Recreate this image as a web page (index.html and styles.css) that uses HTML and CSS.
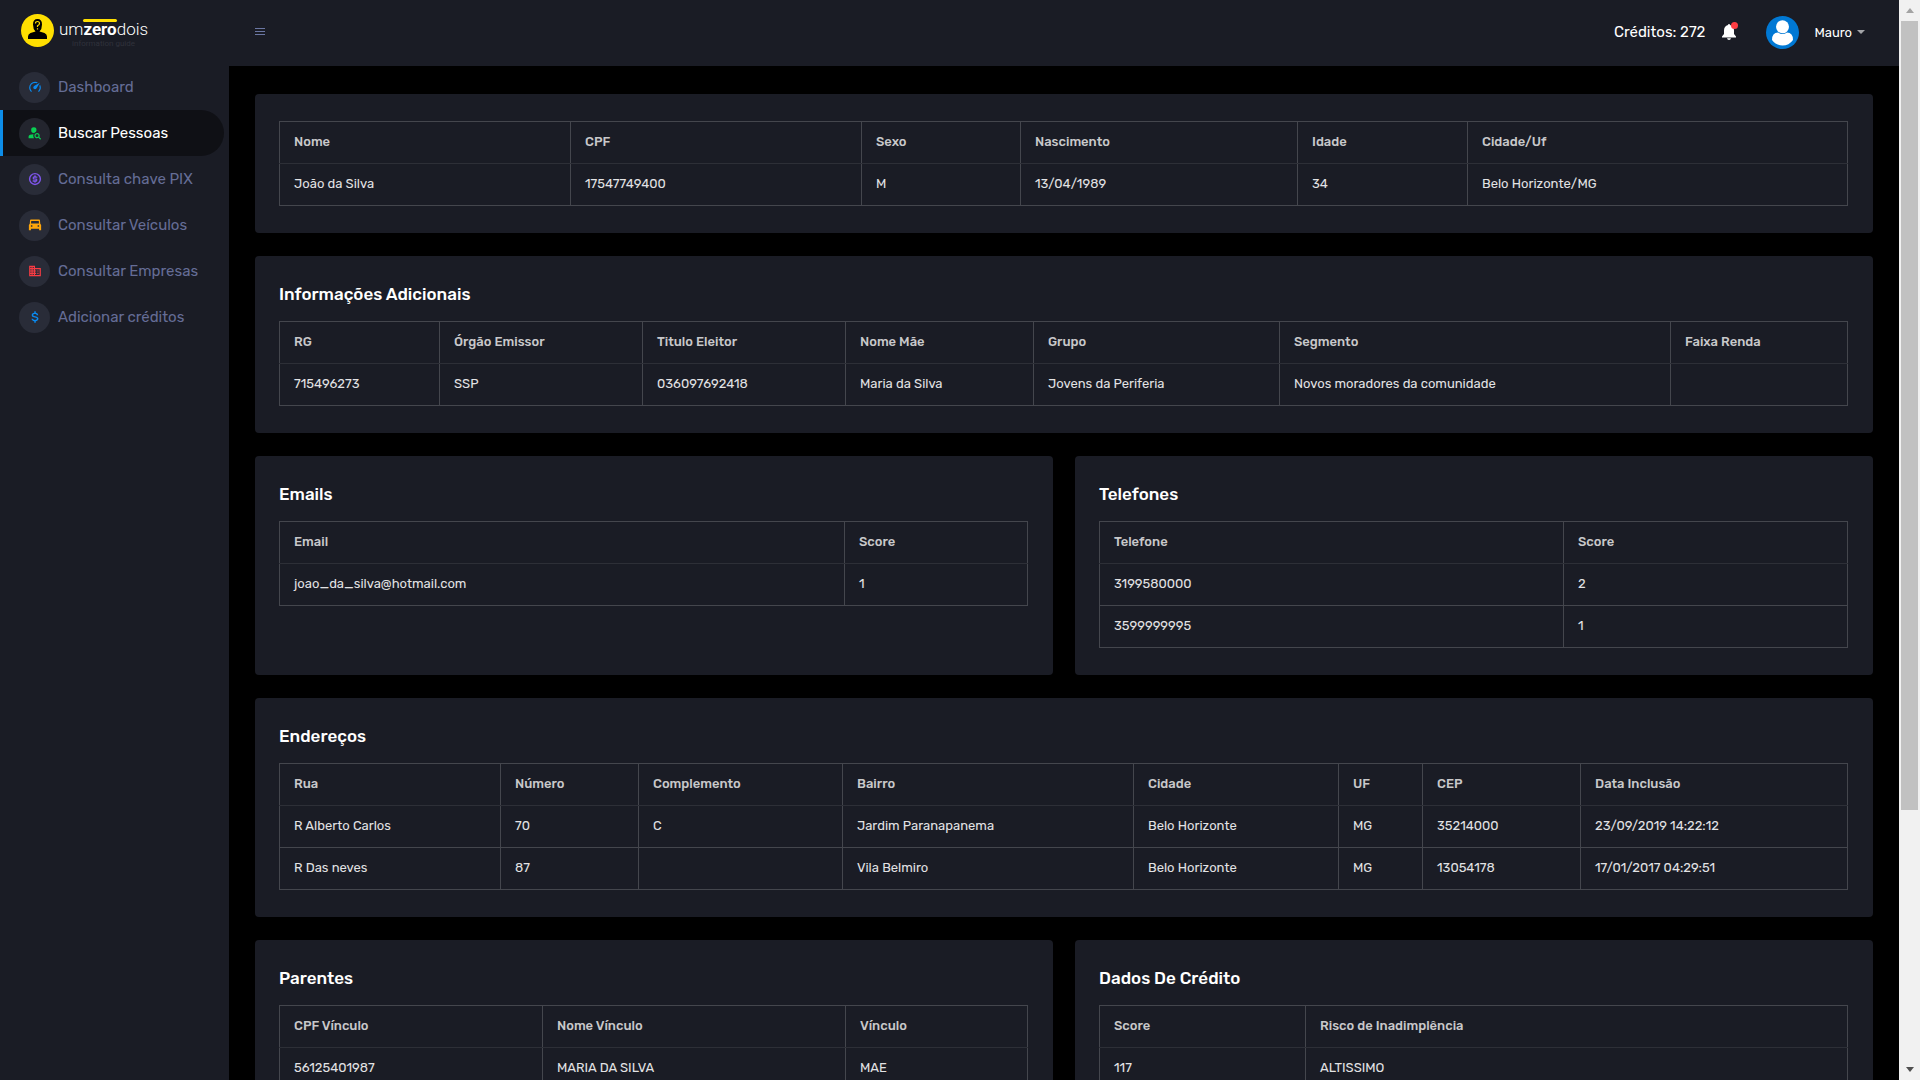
FILE: index.html
```html
<!DOCTYPE html>
<html lang="pt-BR">
<head>
<meta charset="utf-8">
<title>umzerodois - Buscar Pessoas</title>
<link rel="stylesheet" href="styles.css">
</head>
<body>
<div class="viewport">
  <aside class="sidebar">
    <a class="logo" href="#">
      <svg class="logo-mark" viewBox="0 0 33 33" aria-hidden="true">
        <circle cx="16.500" cy="16.500" r="16.500" fill="#ffdf00"/>
        <path d="M7 25V22.500Q7 20 9.500 19L14.500 17.500Q12 15 12 10.500Q12 5 16.500 5Q21 5 21 10.500Q21 15 18.500 17.500L23.500 19Q26 20 26 22.500V25Z" fill="#000"/>
        <path d="M14.500 9.500Q14.500 7.500 16.500 7.500Q18.500 7.500 18.500 9.500Q18.500 10.800 16.500 11.800V13M16.500 14.200V15.400" fill="none" stroke="#ffdf00" stroke-width="1.200"/>
      </svg>
      <span class="logo-text">
        <span class="logo-name">um<b class="logo-zero">zero</b>dois</span>
        <span class="logo-tag">information guide</span>
      </span>
    </a>
    <nav class="menu">
      <a class="menu-item" href="#"><span class="menu-icon blue"><svg viewBox="0 0 24 24"><path d="M12,16A3,3 0 0,1 9,13C9,11.88 9.61,10.9 10.5,10.39L20.21,4.77L14.68,14.35C14.18,15.33 13.17,16 12,16M12,3C13.81,3 15.5,3.5 16.97,4.32L14.87,5.53C14,5.19 13,5 12,5A8,8 0 0,0 4,13C4,15.21 4.89,17.21 6.34,18.65H6.35C6.74,19.04 6.74,19.67 6.35,20.06C5.96,20.45 5.32,20.45 4.93,20.07V20.07C3.12,18.26 2,15.76 2,13A10,10 0 0,1 12,3M22,13C22,15.76 20.88,18.26 19.07,20.07V20.07C18.68,20.45 18.05,20.45 17.66,20.06C17.27,19.67 17.27,19.04 17.66,18.65V18.65C19.11,17.2 20,15.21 20,13C20,12 19.81,11 19.46,10.1L20.67,8C21.5,9.5 22,11.18 22,13Z"/></svg></span>Dashboard</a>
      <a class="menu-item active" href="#" aria-current="page"><span class="menu-icon green"><svg viewBox="0 0 24 24"><path d="M15.5,12C18,12 20,14 20,16.5C20,17.38 19.75,18.21 19.31,18.9L22.39,22L21,23.39L17.88,20.32C17.19,20.75 16.37,21 15.5,21C13,21 11,19 11,16.5C11,14 13,12 15.5,12M15.5,14A2.5,2.5 0 0,0 13,16.5A2.5,2.5 0 0,0 15.5,19A2.5,2.5 0 0,0 18,16.5A2.5,2.5 0 0,0 15.5,14M10,2A4.500,4.500 0 0,1 14.500,7C14.500,8.500 14,9.700 13.18,10.43C12.32,10.75 11.55,11.26 10.91,11.9L10,12A4.700,4.700 0 0,1 5.500,7A4.500,4.500 0 0,1 10,2M1,21V18C1,15.5 5,14 9.5,14C9.18,14.78 9,15.62 9,16.5C9,18 9.38,19.500 10.500,21H1Z"/></svg></span>Buscar Pessoas</a>
      <a class="menu-item" href="#"><span class="menu-icon purple"><svg viewBox="0 0 24 24"><path fill-rule="evenodd" d="M12,1.500A10.500,10.500 0 1,1 12,22.500A10.500,10.500 0 1,1 12,1.500M12,4A8,8 0 1,0 12,20A8,8 0 1,0 12,4M10.500,6H13.500V7.500H16V10H10.500V11H14A2,2 0 0,1 16,13V14.500A2,2 0 0,1 14,16.500H13.500V18H10.500V16.500H8V14H13V13H10A2,2 0 0,1 8,11V9.500A2,2 0 0,1 10,7.500H10.500Z"/></svg></span>Consulta chave PIX</a>
      <a class="menu-item" href="#"><span class="menu-icon orange"><svg viewBox="0 0 24 24"><path fill-rule="evenodd" d="M5,2.500H19Q20.500,2.500 20.500,4L21,10L22.500,12V21H19V18.500H5V21H1.500V12L3,10L3.500,4Q3.500,2.500 5,2.500M5.500,5L5.200,9.500H18.800L18.500,5ZM5,12.500V15H7.500V12.500ZM16.500,12.500V15H19V12.500Z"/></svg></span>Consultar Veículos</a>
      <a class="menu-item" href="#"><span class="menu-icon red"><svg viewBox="0 0 24 24"><path d="M18,15H16V17H18M18,11H16V13H18M20,19H12V17H14V15H12V13H14V11H12V9H20M10,7H8V5H10M10,11H8V9H10M10,15H8V13H10M10,19H8V17H10M6,7H4V5H6M6,11H4V9H6M6,15H4V13H6M6,19H4V17H6M12,7V3H2V21H22V7H12Z"/></svg></span>Consultar Empresas</a>
      <a class="menu-item" href="#"><span class="menu-icon blue"><svg viewBox="0 0 24 24"><path d="M6,15H8.500C8.500,16.08 10.37,17 12,17C13.63,17 15.300,16.08 15.300,15C15.300,13.9 13.96,13.5 11.76,12.97C9.64,12.44 6.300,11.78 6.300,8.500C6.300,6.500 8,5 10.8,4.500V2H13.3V4.500C15.8,5 17.500,6.500 17.500,9H15C15,7.92 13.63,7 12,7C10.37,7 8.800,7.700 8.800,8.600C8.800,9.800 10.04,10.3 12.24,10.8C14.36,11.3 18,12.22 18,15C18,17 16,18.8 13.3,19.3V22H10.8V19.3C8,18.8 6,17 6,15Z"/></svg></span>Adicionar créditos</a>
    </nav>
  </aside>

  <div class="page">
    <header class="topbar">
      <button class="toggle" type="button" aria-label="Alternar menu"><svg viewBox="0 0 10 8" aria-hidden="true"><path d="M0 .5H10M0 3.500H10M0 6.500H10" stroke="#6b77a3"/></svg></button>
      <div class="account">
        <span class="credits">Créditos: 272</span>
        <button class="bell" type="button" aria-label="Notificações">
          <svg viewBox="0 0 14 16" aria-hidden="true"><path d="M6 1Q6 0 7 0T8 1Q12 2 12 6.500V10L14 12.500V13.500H0V12.500L2 10V6.500Q2 2 6 1M5 14.300H9Q8.700 16 7 16T5 14.300" fill="#fff"/></svg>
          <span class="bell-dot"></span>
        </button>
        <button class="user" type="button">
          <svg class="avatar" viewBox="0 0 33 33" aria-hidden="true"><circle cx="16.500" cy="16.500" r="16.500" fill="#0078d4"/><circle cx="16.500" cy="10.800" r="6.500" fill="#fff"/><path d="M6 24Q6 16.500 12 16.500Q16.500 19.500 21 16.500Q27 16.500 27 24Q23 29.500 16.500 29.500T6 24" fill="#fff"/></svg>
          <span>Mauro</span><span class="caret"></span>
        </button>
      </div>
    </header>

    <main class="content">
      <section class="card wide">
        <table class="data person">
          <thead><tr><th>Nome</th><th>CPF</th><th>Sexo</th><th>Nascimento</th><th>Idade</th><th>Cidade/Uf</th></tr></thead>
          <tbody><tr><td>João da Silva</td><td>17547749400</td><td>M</td><td>13/04/1989</td><td>34</td><td>Belo Horizonte/MG</td></tr></tbody>
        </table>
      </section>
      <section class="card wide">
        <h2>Informações Adicionais</h2>
        <table class="data extra">
          <thead><tr><th>RG</th><th>Órgão Emissor</th><th>Titulo Eleitor</th><th>Nome Mãe</th><th>Grupo</th><th>Segmento</th><th>Faixa Renda</th></tr></thead>
          <tbody><tr><td>715496273</td><td>SSP</td><td>036097692418</td><td>Maria da Silva</td><td>Jovens da Periferia</td><td>Novos moradores da comunidade</td><td></td></tr></tbody>
        </table>
      </section>
      <section class="card">
        <h2>Emails</h2>
        <table class="data emails">
          <thead><tr><th>Email</th><th>Score</th></tr></thead>
          <tbody><tr><td>joao_da_silva@hotmail.com</td><td>1</td></tr></tbody>
        </table>
      </section>
      <section class="card">
        <h2>Telefones</h2>
        <table class="data phones">
          <thead><tr><th>Telefone</th><th>Score</th></tr></thead>
          <tbody><tr><td>3199580000</td><td>2</td></tr><tr><td>3599999995</td><td>1</td></tr></tbody>
        </table>
      </section>
      <section class="card wide">
        <h2>Endereços</h2>
        <table class="data addresses">
          <thead><tr><th>Rua</th><th>Número</th><th>Complemento</th><th>Bairro</th><th>Cidade</th><th>UF</th><th>CEP</th><th>Data Inclusão</th></tr></thead>
          <tbody>
            <tr><td>R Alberto Carlos</td><td>70</td><td>C</td><td>Jardim Paranapanema</td><td>Belo Horizonte</td><td>MG</td><td>35214000</td><td>23/09/2019 14:22:12</td></tr>
            <tr><td>R Das neves</td><td>87</td><td></td><td>Vila Belmiro</td><td>Belo Horizonte</td><td>MG</td><td>13054178</td><td>17/01/2017 04:29:51</td></tr>
          </tbody>
        </table>
      </section>
      <section class="card">
        <h2>Parentes</h2>
        <table class="data relatives">
          <thead><tr><th>CPF Vínculo</th><th>Nome Vínculo</th><th>Vínculo</th></tr></thead>
          <tbody><tr><td>56125401987</td><td>MARIA DA SILVA</td><td>MAE</td></tr></tbody>
        </table>
      </section>
      <section class="card">
        <h2>Dados De Crédito</h2>
        <table class="data credit">
          <thead><tr><th>Score</th><th>Risco de Inadimplência</th></tr></thead>
          <tbody><tr><td>117</td><td>ALTISSIMO</td></tr></tbody>
        </table>
      </section>
    </main>
  </div>

  <div class="scrollbar" aria-hidden="true">
    <span class="arrow up"></span>
    <span class="track"><span class="thumb"></span></span>
    <span class="arrow down"></span>
  </div>
</div>
</body>
</html>
```

FILE: styles.css
```css
* { box-sizing: border-box; }

body {
  margin: 0;
  background: #000;
  color: #fff;
  font-family: Rubik, Roboto, "Noto Sans", sans-serif;
  font-size: 13px;
}

a { color: inherit; text-decoration: none; }

button {
  padding: 0;
  border: 0;
  background: none;
  color: inherit;
  font: inherit;
}

svg { display: block; }

.viewport {
  display: flex;
  height: 100vh;
  overflow: hidden;
}

/* Sidebar */
.sidebar {
  flex: 0 0 229px;
  background: #1a1c25;
}

.logo {
  display: flex;
  gap: 5px;
  height: 64px;
  padding: 14px 0 0 21px;
}

.logo-mark { width: 33px; height: 33px; }

.logo-text {
  display: flex;
  flex-direction: column;
  align-items: center;
  padding-top: 5px;
  font-family: Roboto, sans-serif;
}

.logo-name {
  font-size: 17px;
  line-height: 20px;
  font-weight: 300;
}

.logo-zero { position: relative; font-weight: 700; }

.logo-zero::before {
  content: "";
  position: absolute;
  top: 0;
  left: 0;
  right: 0;
  height: 3px;
  border-radius: 2px;
  background: #ffdf00;
}

.logo-tag {
  color: #30323c;
  font-size: 8px;
  line-height: 10px;
}

.menu-item {
  display: flex;
  align-items: center;
  gap: 8px;
  height: 46px;
  margin-right: 5px;
  padding-left: 16px;
  border-left: 3px solid transparent;
  border-radius: 0 23px 23px 0;
  color: #656d96;
  font-size: 15px;
}

.menu-item.active {
  border-left-color: #0d8de8;
  background: #0f1015;
  color: #fff;
}

.menu-icon {
  display: grid;
  place-items: center;
  width: 31px;
  height: 31px;
  border-radius: 50%;
  background: #292c38;
}

.active .menu-icon { background: #23252e; }
.menu-icon svg { width: 14px; height: 14px; fill: currentColor; }
.blue { color: #0a8af0; }
.green { color: #0acf53; }
.purple { color: #7d55e8; }
.orange { color: #ffa60a; }
.red { color: #f93b43; }

/* Main column */
.page { flex: 1; min-width: 0; }

.topbar {
  display: flex;
  align-items: center;
  justify-content: space-between;
  height: 66px;
  padding: 0 34px 2px 26px;
  background: #1a1c25;
}

.toggle svg { width: 10px; height: 8px; }
.account { display: flex; align-items: center; }
.credits { font-size: 15px; }

.bell { position: relative; margin-left: 17px; }
.bell svg { width: 14px; height: 16px; }

.bell-dot {
  position: absolute;
  top: -2px;
  right: -2px;
  width: 7px;
  height: 7px;
  border-radius: 50%;
  background: #fd3d43;
}

.user {
  display: flex;
  align-items: center;
  margin-left: 30px;
}

.avatar { width: 33px; height: 33px; margin-right: 15px; }

.caret {
  margin-left: 5px;
  border: 4px solid transparent;
  border-top-color: #a3a4a8;
  border-bottom: 0;
}

.content {
  display: grid;
  grid-template-columns: 1fr 1fr;
  gap: 23px 22px;
  padding: 28px 26px;
}

.card {
  padding: 27px 25px 27px 24px;
  border-radius: 4px;
  background: #1a1c25;
}

.wide { grid-column: 1 / -1; }

.card h2 {
  margin: 0 0 16px;
  font-size: 17px;
  line-height: 22px;
  font-weight: 500;
}

/* Data tables: the last column takes the remaining width */
.data {
  width: 100%;
  border-collapse: collapse;
  table-layout: fixed;
  border: 1px solid #44464d;
}

.data th,
.data td {
  height: 42px;
  padding: 0 14px 2px;
  border: 1px solid #44464d;
  text-align: left;
  white-space: nowrap;
}

.data th {
  border-bottom-color: #2d2f37;
  color: #c8c8ca;
  font-weight: 500;
}

.data tbody tr:first-child td { border-top-color: #2d2f37; }
.data td { color: #e2e2e4; }

.person th:nth-child(1), .person th:nth-child(2) { width: 291px; }
.person th:nth-child(3) { width: 159px; }
.person th:nth-child(4) { width: 277px; }
.person th:nth-child(5) { width: 170px; }

.extra th:nth-child(1) { width: 160px; }
.extra th:nth-child(2), .extra th:nth-child(3) { width: 203px; }
.extra th:nth-child(4) { width: 188px; }
.extra th:nth-child(5) { width: 246px; }
.extra th:nth-child(6) { width: 391px; }

.emails th:nth-child(1) { width: 565px; }

.phones th:nth-child(1) { width: 464px; }

.addresses th:nth-child(1) { width: 221px; }
.addresses th:nth-child(2) { width: 138px; }
.addresses th:nth-child(3) { width: 204px; }
.addresses th:nth-child(4) { width: 291px; }
.addresses th:nth-child(5) { width: 205px; }
.addresses th:nth-child(6) { width: 84px; }
.addresses th:nth-child(7) { width: 158px; }

.relatives th:nth-child(1) { width: 263px; }
.relatives th:nth-child(2) { width: 303px; }

.credit th:nth-child(1) { width: 206px; }

/* Scroll bar */
.scrollbar {
  display: flex;
  flex-direction: column;
  flex: 0 0 21px;
  padding: 0 2px;
  background: #f1f1f1;
}

.arrow {
  display: grid;
  place-items: center;
  height: 21px;
}

.arrow::before {
  content: "";
  border: 4px solid transparent;
}

.up::before { border-top: 0; border-bottom: 5px solid #a3a3a3; }
.down::before { border-bottom: 0; border-top: 5px solid #505050; }
.track { flex: 1; }

.thumb {
  display: block;
  height: 76%;
  background: #c1c1c1;
}
```
